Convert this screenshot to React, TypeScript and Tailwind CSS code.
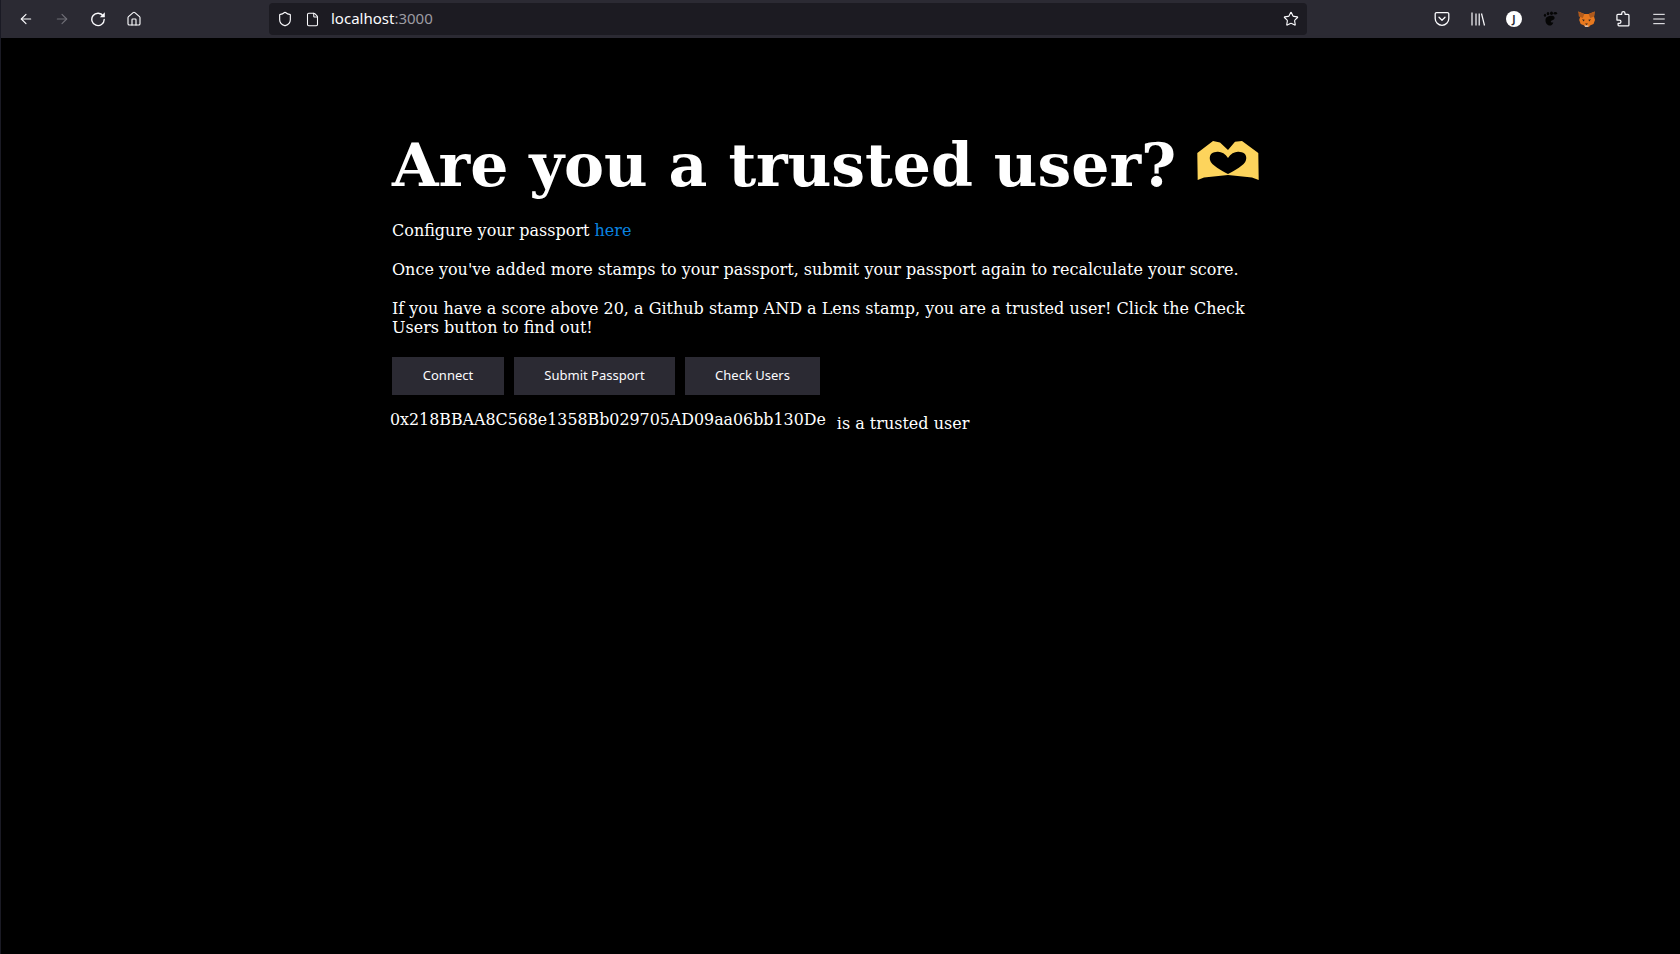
import { ArrowLeft, ArrowRight, Home, Shield, File, Star, Menu } from "lucide-react";

function ReloadIcon() {
  return (
    <svg width="16" height="16" viewBox="0 0 16 16" fill="none">
      <path d="M13.200 5A6.200 6.200 0 1 0 14.200 8.500" stroke="#fbfbfe" strokeWidth="1.400" strokeLinecap="round" />
      <path d="M14.800 1.200v5h-5z" fill="#fbfbfe" />
    </svg>
  );
}

function PuzzleIcon() {
  return (
    <svg width="16" height="16" viewBox="0 0 16 16" fill="none" stroke="#fbfbfe" strokeWidth="1.300" strokeLinejoin="round">
      <path d="M6.500 3.500V2.400a1.700 1.700 0 0 1 3.400 0v1.100h3.100a1 1 0 0 1 1 1v10a1 1 0 0 1-1 1H3.500a.8.800 0 0 1-.8-.8v-1.900h1.300a1.700 1.700 0 0 0 0-3.400H1.500V4.500a1 1 0 0 1 1-1z" transform="translate(0.500 0) scale(0.96)" />
    </svg>
  );
}

function PocketIcon() {
  return (
    <svg width="16" height="16" viewBox="0 0 16 16" fill="none" stroke="#fbfbfe" strokeWidth="1.300">
      <path d="M2.500 1.700h11a1.300 1.300 0 0 1 1.300 1.300v4.500a6.800 6.800 0 0 1-13.600 0V3a1.300 1.300 0 0 1 1.300-1.300z" />
      <path d="M5 6.300l3 2.900 3-2.900" strokeLinecap="round" strokeLinejoin="round" />
    </svg>
  );
}

function LibraryIcon() {
  return (
    <svg width="16" height="16" viewBox="0 0 16 16" fill="none" stroke="#fbfbfe" strokeWidth="1.200">
      <path d="M2 1.500v13M6 2.500v12M9.200 2.500v12M11.500 2.500l3 12" />
    </svg>
  );
}

function FootIcon() {
  return (
    <svg width="16" height="16" viewBox="0 0 16 16" fill="#050505">
      <path d="M7.500 5c3.800-1 6 1 4.800 2.900-.8 1.200-3.300 1-3.500 2.500-.1 1 1.300 1.300 2.500 1-.5 2.600-3 3.800-5 2.800C3.300 13.100 2.800 8 4.300 6.500c1-.9 2.200-1.200 3.200-1.500z" />
      <ellipse cx="3" cy="4.300" rx="1.100" ry="1.500" />
      <ellipse cx="6" cy="2.600" rx="1.300" ry="1.700" />
      <ellipse cx="9.500" cy="2.300" rx="1.500" ry="1.700" />
      <ellipse cx="13.300" cy="2.300" rx="1.800" ry="1.300" />
    </svg>
  );
}

function FoxIcon() {
  return (
    <svg width="17" height="17" viewBox="0 0 17 17">
      <path d="M0.300 0.500l6 2.500h4.400l6-2.500-.7 5 1 3.500-1.500 4-3.500 1.500-1 1.500h-3.800l-1-1.500-3.500-1.500-1.500-4 1-3.500z" fill="#e8791f" />
      <path d="M0.300 0.500l6 2.500-1.500 4-4-1.500z" fill="#b05a1c" />
      <path d="M16.700 0.500l-6 2.500 1.500 4 4-1.500z" fill="#b05a1c" />
      <path d="M4 8.300l2.700 0.400-1 1.800zM13 8.300l-2.700 0.400 1 1.800z" fill="#33281f" />
      <path d="M6.300 14.500h4.400l-1 1.500h-2.400z" fill="#d7c1b3" />
      <path d="M7 12.500h3l-1.500 1.500z" fill="#33281f" />
    </svg>
  );
}

function HeartHands() {
  return (
    <svg width="62" height="41" viewBox="27 15 62 41" className="mb-[10px] inline-block">
      <path
        fillRule="evenodd"
        d="M27.300 28 L43 16 L50 17.500 L58 25 L65 16.700 L72 16 L88.300 28 L88.700 55 L82 52.500 L58 50 L34 52.500 L27.700 55 Z M58 33 C55 28 50 26 46 27 C41 27 39 31 40 35 C41 40 52 46 58 49 C64 46 75 40 76 35 C77 31 75 27 70 27 C66 26 61 28 58 33 Z"
        fill="#fdd45c"
      />
    </svg>
  );
}

export default function App() {
  return (
    <div className="min-h-[954px] border-l border-[#1a1a24] bg-black font-['DejaVu_Serif',serif] text-white">
      {/* browser toolbar */}
      <div className="flex h-[38px] items-center bg-[#2b2a33] pr-[13px] pl-[17px] text-[#fbfbfe]">
        <div className="flex items-center gap-[20px]">
          <ArrowLeft size={16} strokeWidth={1.7} />
          <ArrowRight size={16} strokeWidth={1.7} className="text-[#6f6e76]" />
          <ReloadIcon />
          <Home size={16} strokeWidth={1.7} />
        </div>
        <div className="ml-[127px] flex h-[32px] w-[1038px] items-center rounded bg-[#1c1b22] px-[8px]">
          <Shield size={16} strokeWidth={1.7} />
          <File size={15} strokeWidth={1.7} className="ml-[12px]" />
          <span className="-mt-[1px] ml-[11px] font-['Noto_Sans',sans-serif] text-[15px]">
            localhost<span className="text-[#9d9ca3]">:3000</span>
          </span>
          <Star size={16} strokeWidth={1.7} className="ml-auto" />
        </div>
        <div className="ml-auto flex items-center gap-[20px]">
          <PocketIcon />
          <LibraryIcon />
          <div className="flex h-4 w-4 items-center justify-center rounded-full bg-white font-['Noto_Sans',sans-serif] text-[10px] font-bold text-[#2b2a33]">
            J
          </div>
          <FootIcon />
          <FoxIcon />
          <PuzzleIcon />
          <Menu size={16} strokeWidth={1.5} />
        </div>
      </div>

      <main className="ml-[391px] w-[896px] pt-[91px]">
        <h1 className="flex items-center gap-[21px] text-[60px] leading-[72px] font-bold">
          Are you a trusted user?
          <HeartHands />
        </h1>
        <p className="mt-[20px] text-base leading-[19px]">
          Configure your passport <a className="text-[#0a84e0]">here</a>
        </p>
        <p className="mt-5 text-base leading-[19px]">
          Once you've added more stamps to your passport, submit your passport again to recalculate your score.
        </p>
        <p className="mt-5 text-base leading-[19px]">
          If you have a score above 20, a Github stamp AND a Lens stamp, you are a trusted user! Click the Check Users button to find out!
        </p>
        <div className="mt-5 flex gap-[10px] font-['Noto_Sans',sans-serif] text-[13px]">
          <button className="h-[38px] w-[112px] bg-[#2b2a33] text-[#fbfbfe]">Connect</button>
          <button className="h-[38px] w-[161px] bg-[#2b2a33] text-[#fbfbfe]">Submit Passport</button>
          <button className="h-[38px] w-[135px] bg-[#2b2a33] text-[#fbfbfe]">Check Users</button>
        </div>
        <div className="mt-[15px] flex items-start">
          <span className="-ml-[2px] text-[15.85px] leading-[19px]">0x218BBAA8C568e1358Bb029705AD09aa06bb130De</span>
          <span className="mt-[4px] ml-[11px] text-base leading-[19px]">is a trusted user</span>
        </div>
      </main>
    </div>
  );
}
